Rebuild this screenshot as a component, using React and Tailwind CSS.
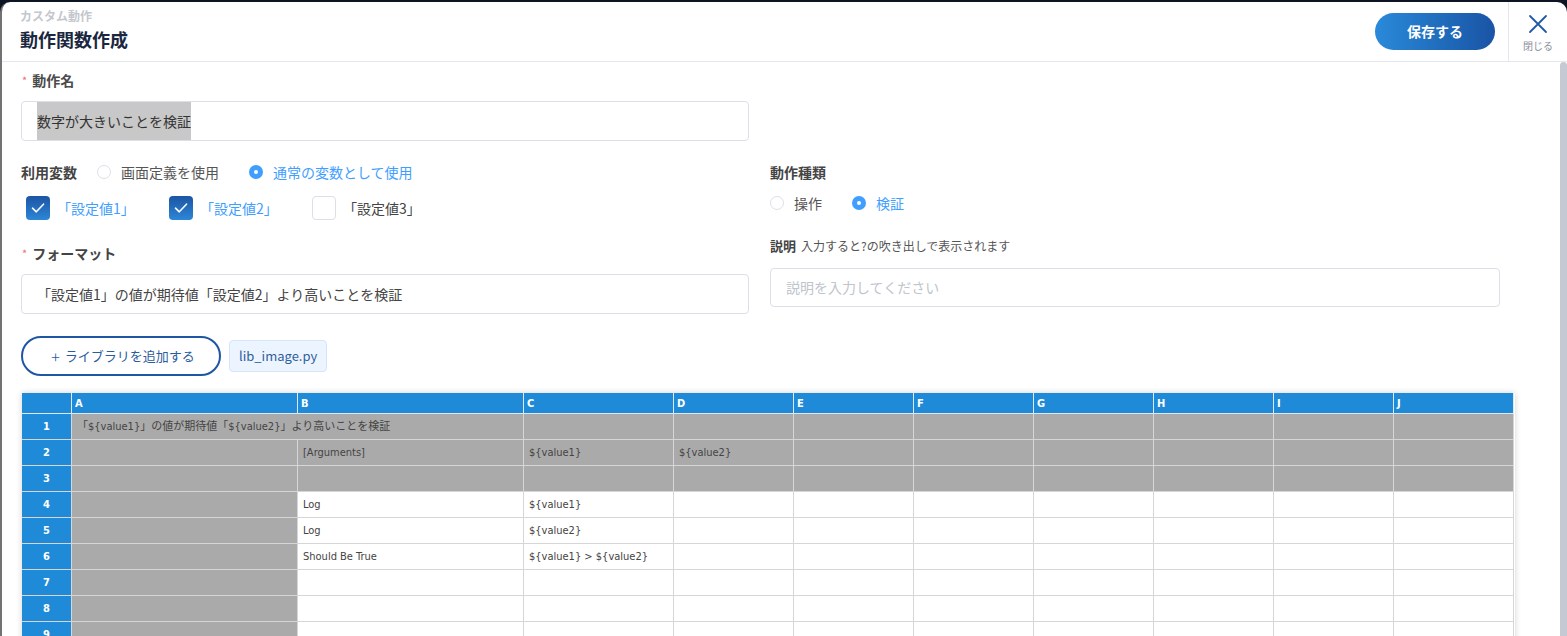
import React from 'react';

const cols = ['A', 'B', 'C', 'D', 'E', 'F', 'G', 'H', 'I', 'J'];

// each row: list of cells { t: text, g: gray, s: spans two columns }
const rows = [
  [{ t: '「${value1}」の値が期待値「${value2}」より高いことを検証', g: true, s: true }, ...Array(8).fill({ g: true })],
  [{ g: true }, { t: '[Arguments]', g: true }, { t: '${value1}', g: true }, { t: '${value2}', g: true }, ...Array(6).fill({ g: true })],
  [...Array(10).fill({ g: true })],
  [{ g: true }, { t: 'Log' }, { t: '${value1}' }, ...Array(7).fill({})],
  [{ g: true }, { t: 'Log' }, { t: '${value2}' }, ...Array(7).fill({})],
  [{ g: true }, { t: 'Should Be True' }, { t: '${value1} > ${value2}' }, ...Array(7).fill({})],
  [{ g: true }, ...Array(9).fill({})],
  [{ g: true }, ...Array(9).fill({})],
  [{ g: true }, ...Array(9).fill({})],
];

const Radio = ({ checked, label }) => (
  <label className="flex items-center mr-[30px]">
    {checked ? (
      <span className="w-[14px] h-[14px] rounded-full bg-[#409eff] flex items-center justify-center">
        <span className="w-[4px] h-[4px] rounded-full bg-white"></span>
      </span>
    ) : (
      <span className="w-[14px] h-[14px] rounded-full border border-[#dcdfe6] bg-white"></span>
    )}
    <span className={`ml-[10px] text-[14px] leading-[20px] ${checked ? 'text-[#409eff]' : 'text-[#555]'}`}>{label}</span>
  </label>
);

const Check = ({ checked, label }) => (
  <div className="flex items-center w-[143px]">
    {checked ? (
      <span className="w-[24px] h-[24px] rounded-[4px] bg-gradient-to-b from-[#1c55a3] to-[#2d87d7] flex items-center justify-center">
        <svg width="16" height="16" viewBox="0 0 16 16" fill="none">
          <path d="M2.5 8.2 L6.3 11.8 L13.5 4.2" stroke="white" strokeWidth="1.6" strokeLinecap="round" strokeLinejoin="round" />
        </svg>
      </span>
    ) : (
      <span className="w-[24px] h-[24px] rounded-[4px] border border-[#dcdfe6] bg-white"></span>
    )}
    <span className={`ml-[7px] text-[14px] leading-[20px] ${checked ? 'text-[#409eff]' : 'text-[#444]'}`}>{label}</span>
  </div>
);

const Sheet = () => (
  <div className="ml-[1px] w-[1493px] shadow-[0_0_6px_rgba(0,0,0,0.18)] font-['DejaVu_Sans_Condensed','DejaVu_Sans','Noto_Sans_CJK_JP',sans-serif] [font-stretch:condensed] text-[11px]">
    <div className="grid grid-cols-[50px_226px_226px_150px_120px_120px_120px_120px_120px_120px_120px]">
      <div className="h-[21px] bg-[#1f8bd8] border-r border-b border-[#dfe8f0]"></div>
      {cols.map((c) => (
        <div key={c} className="h-[21px] bg-[#1f8bd8] border-r border-b border-[#dfe8f0] pl-[3px] text-white font-bold leading-[21px]">
          {c}
        </div>
      ))}
      {rows.map((r, i) => (
        <React.Fragment key={i}>
          <div className="h-[26px] bg-[#1f8bd8] border-r border-b border-[#d6d6d6] text-white font-bold flex items-center justify-center pt-[2px]">
            {i + 1}
          </div>
          {r.map((cell, j) => (
            <div
              key={j}
              className={`h-[26px] border-r border-b border-[#d6d6d6] pl-[5px] pt-[2px] flex items-center whitespace-nowrap overflow-hidden text-[#444] ${cell.g ? 'bg-[#aaaaaa]' : 'bg-white'} ${cell.s ? 'col-span-2' : ''}`}
            >
              {cell.t}
            </div>
          ))}
        </React.Fragment>
      ))}
    </div>
  </div>
);

const App = () => {
  return (
    <div className="w-[1567px] h-[636px] overflow-hidden bg-[#0d1423] pt-[2px] font-['Noto_Sans_CJK_JP','Noto_Sans',sans-serif]">
      <div className="h-full bg-white rounded-t-[10px] border-l-2 border-[#727272] flex flex-col">
        {/* Header */}
        <header className="h-[60px] shrink-0 border-b border-[#e4e7ed] flex items-center">
          <div className="flex-1 pl-[18px] pt-[6px] self-stretch">
            <div className="text-[12px] leading-[16px] font-bold text-[#c3c7ce]">カスタム動作</div>
            <div className="mt-[2px] text-[18px] leading-[26px] font-bold text-[#1b2740]">動作関数作成</div>
          </div>
          <button className="w-[120px] h-[37px] mr-[13px] rounded-full bg-gradient-to-r from-[#2a8ad9] to-[#1a54a5] text-white text-[14px] font-bold">
            保存する
          </button>
          <div className="w-[59px] self-stretch border-l border-[#e4e7ed] flex flex-col items-center pt-[12px]">
            <svg width="20" height="20" viewBox="0 0 20 20" fill="none">
              <path d="M2 2 L18 18 M18 2 L2 18" stroke="#1f5aa6" strokeWidth="1.8" strokeLinecap="round" />
            </svg>
            <span className="mt-[6px] text-[10px] leading-[12px] text-[#8a8f98]">閉じる</span>
          </div>
        </header>

        {/* Body */}
        <div className="flex-1 flex min-h-0">
          <main className="flex-1 pl-[19px] pt-[8px] overflow-hidden">
            <div className="flex items-center h-[20px] text-[14px]">
              <span className="text-[#f56c6c] text-[11px] mr-[5px] ml-[1px]">*</span>
              <span className="font-bold text-[#4b4b4b]">動作名</span>
            </div>
            <div className="mt-[11px] w-[728px] h-[40px] border border-[#dcdfe6] rounded-[4px] pl-[15px] flex items-stretch">
              <span className="bg-[#c8c8c8] text-[#333] text-[14px] flex items-center">数字が大きいことを検証</span>
            </div>

            <div className="mt-[21px] flex gap-x-[21px]">
              {/* left column */}
              <div className="w-[728px]">
                <div className="flex items-center h-[20px]">
                  <span className="text-[14px] font-bold text-[#444] mr-[20px]">利用変数</span>
                  <Radio label="画面定義を使用" />
                  <Radio checked label="通常の変数として使用" />
                </div>
                <div className="mt-[14px] flex items-center h-[24px] pl-[5px]">
                  <Check checked label="「設定値1」" />
                  <Check checked label="「設定値2」" />
                  <Check label="「設定値3」" />
                </div>
                <div className="mt-[23px] flex items-center h-[20px] text-[14px]">
                  <span className="text-[#f56c6c] text-[11px] mr-[5px] ml-[1px]">*</span>
                  <span className="font-semibold text-[#444]">フォーマット</span>
                </div>
                <div className="mt-[11px] w-[728px] h-[40px] border border-[#dcdfe6] rounded-[4px] pl-[15px] flex items-center text-[14px] text-[#444]">
                  「設定値1」の値が期待値「設定値2」より高いことを検証
                </div>
              </div>

              {/* right column */}
              <div className="w-[730px]">
                <div className="h-[20px] flex items-center text-[14px] font-bold text-[#444]">動作種類</div>
                <div className="mt-[11px] flex items-center h-[20px]">
                  <Radio label="操作" />
                  <Radio checked label="検証" />
                </div>
                <div className="mt-[23px] h-[20px] flex items-center text-[#555]">
                  <span className="text-[13px] font-bold text-[#444]">説明</span>
                  <span className="ml-[5px] text-[12px]">入力すると?の吹き出しで表示されます</span>
                </div>
                <div className="mt-[12px] h-[39px] border border-[#dcdfe6] rounded-[4px] pl-[15px] flex items-center text-[14px] text-[#c0c4cc]">
                  説明を入力してください
                </div>
              </div>
            </div>

            <div className="mt-[22px] flex items-center">
              <button className="w-[200px] h-[40px] rounded-full border-2 border-[#1f56a3] text-[#2a5c9e] text-[13px] flex items-center justify-center pl-[4px]">
                <span className="text-[16px] leading-none mr-[5px] font-light">+</span>ライブラリを追加する
              </button>
              <span className="ml-[8px] h-[32px] px-[9px] rounded-[4px] bg-[#ecf5ff] border border-[#d4e6fb] text-[#2f5e9c] text-[13px] flex items-center">
                lib_image.py
              </span>
            </div>

            <div className="mt-[17px]">
              <Sheet />
            </div>
          </main>
          <div className="w-[9px] shrink-0 pl-[2px]">
            <div className="h-full bg-[#c5c9d1] rounded-t-[4px]"></div>
          </div>
        </div>
      </div>
    </div>
  );
};

export default App;
